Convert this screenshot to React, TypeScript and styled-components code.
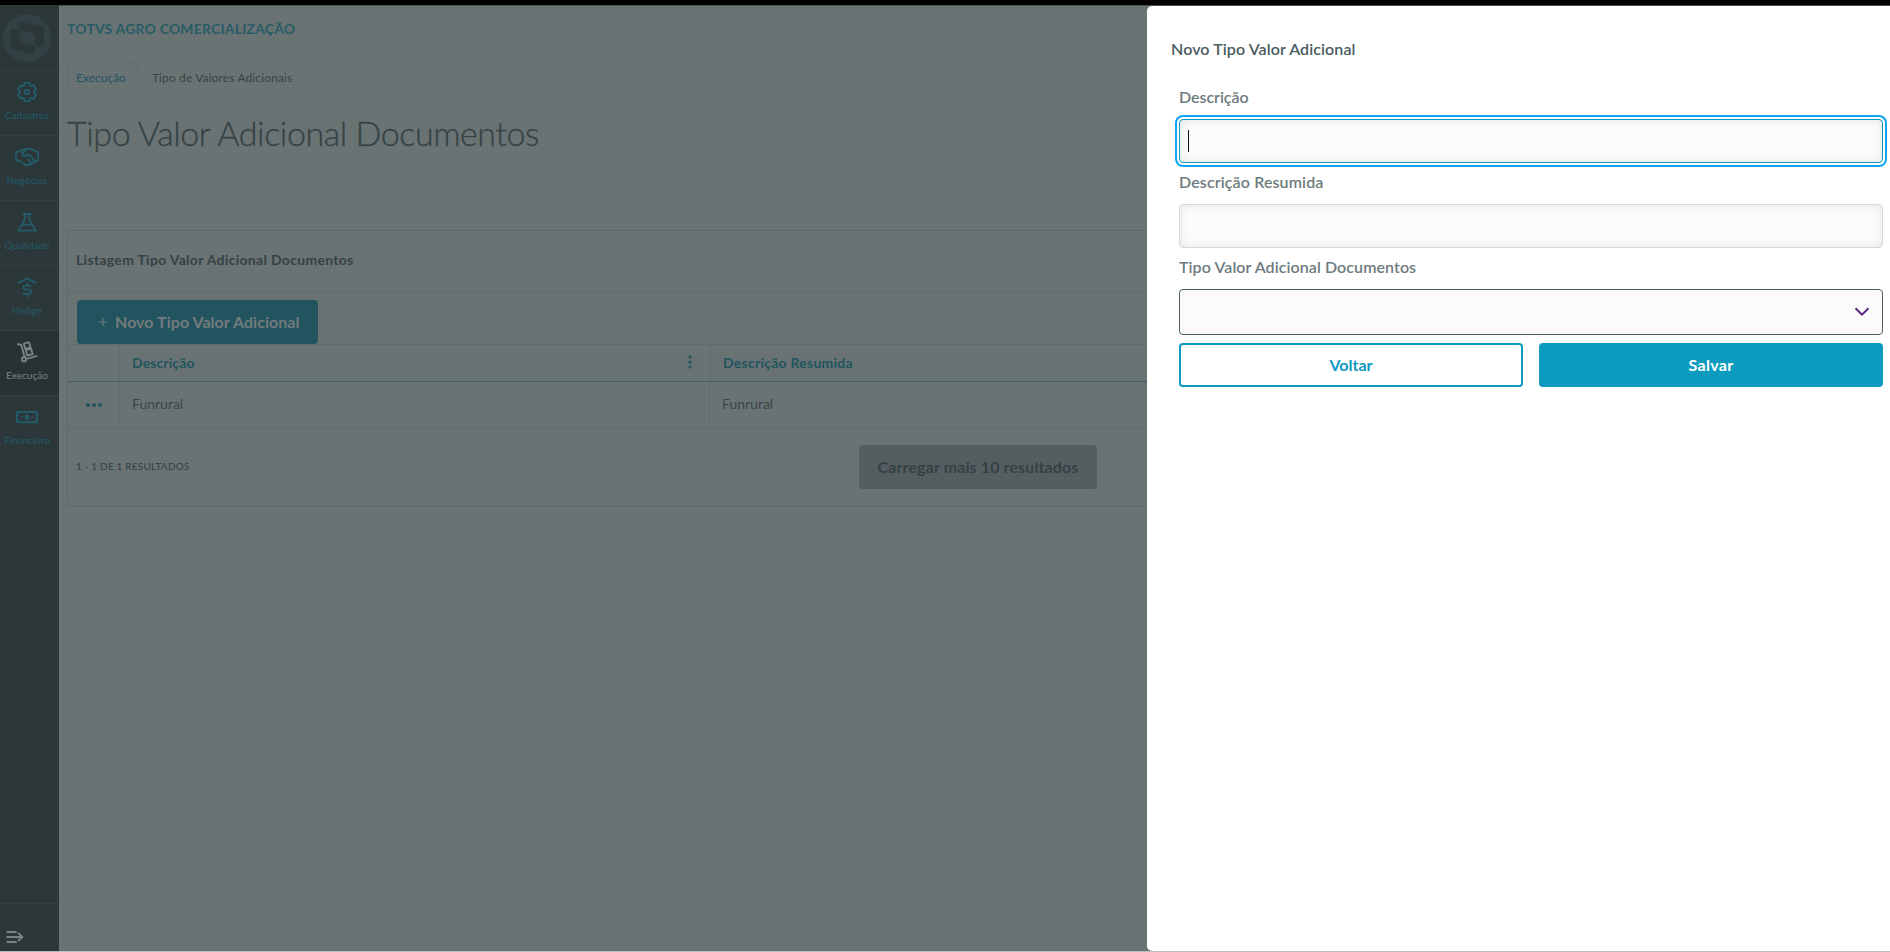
import React from 'react';
import styled, { createGlobalStyle, css } from 'styled-components';

const GlobalStyle = createGlobalStyle`
  *, *::before, *::after { box-sizing: border-box; }
  body { margin: 0; font-family: Lato, "Liberation Sans", sans-serif; overflow: hidden; }
  button, input { font-family: inherit; }
`;

const page = '#6a7374';
const line = '#626b6d';
const side = '#2c3739';
const teal = '#22545f';
const dark = '#364345';

const Screen = styled.div`
  position: relative;
  display: flex;
  width: 1890px;
  height: 952px;
  border-top: 5px solid #000;
  border-bottom: 1px solid #b9bdbf;
  background: ${page};
  overflow: hidden;
`;

/* Side menu */
const Sidebar = styled.nav`
  display: flex;
  flex-direction: column;
  flex: none;
  width: 59px;
  border-top: 1px solid #343638;
  background: ${side};
`;

const LogoBox = styled.div`
  height: 64px;
  padding: 8px 0 0 3px;
`;

const MenuItem = styled.a<{ $active?: boolean }>`
  display: flex;
  flex-direction: column;
  align-items: center;
  height: 65px;
  padding: 8px 5px 0 0;
  border-top: 1px solid #344042;
  background: ${p => (p.$active ? '#283133' : 'transparent')};
  color: ${p => (p.$active ? '#7a8385' : '#235b69')};
  svg { display: block; }
`;

const MenuLabel = styled.span<{ $spacing: number }>`
  margin-top: 4px;
  font-size: 10px;
  line-height: 12px;
  letter-spacing: ${p => p.$spacing}px;
`;

const Collapse = styled.div`
  height: 48px;
  margin-top: auto;
  padding: 26px 0 0 6px;
  border-top: 1px solid #344042;
  svg { display: block; }
`;

/* Page content */
const Main = styled.main`
  display: flex;
  flex-direction: column;
  flex: 1;
  padding: 0 9px 0 8px;
  border-top: 1px solid #4b5052;
`;

const Brand = styled.div`
  margin-top: 14px;
  font-size: 14px;
  font-weight: 700;
  line-height: 18px;
  letter-spacing: 0.18px;
  color: #285b66;
`;

const Breadcrumb = styled.div`
  display: flex;
  align-items: center;
  height: 32px;
  margin-top: 24px;
  padding-left: 8px;
  border: 1px solid #646d6f;
  border-radius: 4px;
  font-size: 12px;
  color: ${dark};
  svg { margin: 0 8px; }
`;

const CrumbLink = styled.a`
  padding-bottom: 2px;
  color: ${teal};
`;
const Crumb = styled.span`
  padding-bottom: 2px;
  letter-spacing: 0.13px;
`;

const PageTitle = styled.h1`
  margin: 18px 0 0;
  font-size: 34px;
  font-weight: 300;
  line-height: 42px;
  letter-spacing: -0.44px;
  -webkit-text-stroke: 0.35px ${dark};
  color: ${dark};
`;

const Card = styled.section`
  height: 277px;
  margin-top: 76px;
  border: 1px solid #5d6668;
  border-radius: 4px;
`;

const CardTitle = styled.h2`
  height: 60px;
  margin: 0;
  padding-left: 8px;
  font-size: 14px;
  font-weight: 700;
  line-height: 58px;
  letter-spacing: 0.3px;
  color: #354244;
`;

const Toolbar = styled.div`
  height: 53px;
  padding: 8px 0 0 9px;
  border-top: 1px solid ${line};
`;

const NewButton = styled.button`
  display: flex;
  align-items: center;
  width: 241px;
  height: 44px;
  padding: 0 0 2px 21px;
  border: 0;
  border-radius: 4px;
  background: ${teal};
  color: #727b7d;
  font-size: 16px;
  font-weight: 700;
  letter-spacing: 0.05px;
  svg { margin: 2px 7px 0 0; }
`;

const Grid = styled.div`
  display: grid;
`;

const HeadRow = styled.div`
  display: grid;
  grid-template-columns: 52px 591px 1fr;
  height: 38px;
  border-top: 1px solid ${line};
  border-bottom: 1px solid #3e606c;
`;

const BodyRow = styled.div`
  display: grid;
  grid-template-columns: 52px 590px 1fr;
  height: 46px;
  border-bottom: 1px solid ${line};
`;

const Cell = styled.div<{ $head?: boolean; $last?: boolean; $spacing?: number }>`
  display: flex;
  align-items: center;
  justify-content: space-between;
  padding: 0 18px 2px 12px;
  border-right: ${p => (p.$last ? '0' : `1px solid ${line}`)};
  font-size: 14px;
  letter-spacing: ${p => p.$spacing ?? 0}px;
  color: #3a4648;
  ${p => p.$head && css`
    font-weight: 700;
    color: ${teal};
  `}
`;

const ActionCell = styled(Cell)`
  justify-content: center;
  padding: 0;
  color: ${teal};
`;

const CardFooter = styled.footer`
  display: grid;
  grid-template-columns: 791px 1fr;
  align-items: center;
  height: 78px;
  padding: 0 0 1px 8px;
`;

const Results = styled.span`
  padding-bottom: 1px;
  font-size: 10px;
  font-weight: 500;
  letter-spacing: 0.2px;
  color: ${dark};
`;

const LoadMore = styled.button`
  width: 238px;
  height: 44px;
  margin-left: -8px;
  padding: 0 0 1px;
  border: 0;
  border-radius: 4px;
  background: #555d60;
  color: #344144;
  font-size: 16px;
  font-weight: 700;
  letter-spacing: 0.12px;
`;

/* Drawer that slides over the page */
const Drawer = styled.aside`
  position: absolute;
  top: 1px;
  right: 0;
  bottom: 0;
  display: flex;
  flex-direction: column;
  width: 743px;
  padding: 31px 7px 0 24px;
  border-radius: 5px 0 0 5px;
  background: #fff;
`;

const DrawerTitle = styled.h2`
  margin: 0;
  font-size: 16px;
  font-weight: 600;
  line-height: 24px;
  letter-spacing: 0.1px;
  color: #4a5c60;
`;

const Form = styled.form`
  display: flex;
  flex-direction: column;
  padding: 18px 0 0 8px;
`;

const Label = styled.label<{ $spacing: number }>`
  height: 40px;
  padding-top: 6px;
  font-size: 16px;
  font-weight: 600;
  line-height: 24px;
  letter-spacing: ${p => p.$spacing}px;
  color: #6e7b7e;
`;

const fieldBox = css`
  width: 100%;
  border-radius: 4px;
  background: #fbfbfb;
`;

const Field = styled.div<{ $focus?: boolean }>`
  ${fieldBox}
  display: flex;
  align-items: center;
  height: 44px;
  margin-bottom: 1px;
  padding: 0 8px;
  border: 1px solid ${p => (p.$focus ? '#0c9abe' : '#d9d9d9')};
  box-shadow: inset 0 0 8px rgba(0, 0, 0, 0.1)${p => (p.$focus ? ', 0 0 0 2px #fff, 0 0 0 4px #0fa5f5' : '')};
`;

const Caret = styled.span`
  width: 1px;
  height: 22px;
  background: #111;
`;

const Select = styled.div`
  ${fieldBox}
  display: flex;
  align-items: center;
  justify-content: flex-end;
  height: 46px;
  padding-right: 12px;
  border: 1px solid #4a5c60;
`;

const Actions = styled.div`
  display: grid;
  grid-template-columns: 1fr 1fr;
  gap: 16px;
  margin-top: 8px;
`;

const ActionButton = styled.button<{ $primary?: boolean }>`
  height: 44px;
  padding: 0 0 1px;
  border: 2px solid #0c9abe;
  border-radius: 4px;
  background: ${p => (p.$primary ? '#0c9abe' : '#fff')};
  color: ${p => (p.$primary ? '#fff' : '#0c9abe')};
  font-size: 16px;
  font-weight: 700;
  letter-spacing: ${p => (p.$primary ? 0.3 : 0)}px;
`;

/* Icons */
const IconSvg = styled.svg.attrs({
  width: 26, height: 26, viewBox: '0 0 26 26', fill: 'none',
  stroke: 'currentColor', strokeWidth: 1.9, strokeLinejoin: 'round' as const,
})``;

const gearPoints = Array.from({ length: 6 }).flatMap((_, k) =>
  ([[-27, 6.9], [-14, 9.4], [14, 9.4], [27, 6.9]] as const).map(([a, r]) => {
    const t = ((k * 60 - 90 + a) * Math.PI) / 180;
    return `${(13 + r * Math.cos(t)).toFixed(2)},${(13 + r * Math.sin(t)).toFixed(2)}`;
  })
).join(' ');

const GearIcon = () => (
  <IconSvg><polygon points={gearPoints} /><circle cx="13" cy="13" r="2.3" /></IconSvg>
);

const HandshakeIcon = () => (
  <IconSvg>
    <path d="M2 8.5 L6 7 L9 5.5 L13 5 L17 4.8 L20 6.8 L24 8.2 L24 16.5 L20 18 L17 20.2 L12.5 21.2 L9.5 19.5 L5.5 17 L2 16 Z" />
    <path d="M13 5.3 L8.2 9 Q7.8 11.6 10.5 12 L14.5 10.5 L17.2 12.5 L20.3 17.3 M14 14.5 L17.3 19.6" />
  </IconSvg>
);

const FlaskIcon = () => (
  <IconSvg>
    <path d="M8.5 5H17.5M10.8 5V10.5L4.2 21.6H21.8L15.2 10.5V5M7.8 15.8H18.2" strokeLinejoin="miter" />
  </IconSvg>
);

const HedgeIcon = () => (
  <IconSvg>
    <path d="M4 9.2L13 4.4L22 9.2" />
    <path d="M17 11.6H11.5Q9.3 11.6 9.3 13.6T11.5 15.6H14.7Q17 15.6 17 17.8T14.7 20H9M13 8.5V11.6M13 20V23.2" />
  </IconSvg>
);

const DollyIcon = () => (
  <IconSvg>
    <path d="M3.2 4.8L7.2 6L10.7 18.2M12.5 19.8L23.2 16.8" />
    <circle cx="10" cy="20.4" r="2.1" />
    <path d="M9.8 4.7L15 3.2L16.5 8.4L11.3 9.9ZM11.8 11.2L17 9.7L18.6 15L13.4 16.5Z" />
  </IconSvg>
);

const MoneyIcon = () => (
  <IconSvg>
    <rect x="3" y="8" width="20" height="10.2" rx="0.6" strokeWidth="2.1" />
    <path d="M3 11L6 8H3ZM23 11L20 8H23ZM3 15.2L6 18.2H3ZM23 15.2L20 18.2H23Z" fill="currentColor" stroke="none" />
    <ellipse cx="13" cy="13.1" rx="2.2" ry="2.9" fill="currentColor" stroke="none" />
    <circle cx="8" cy="13.1" r="1" fill="currentColor" stroke="none" />
    <circle cx="18" cy="13.1" r="1" fill="currentColor" stroke="none" />
  </IconSvg>
);

const Logo = () => (
  <svg width="48" height="48" viewBox="0 0 48 48">
    <circle cx="24" cy="24" r="24" fill="#344144" />
    <path d="M16.5 8.5Q16.8 7.6 18.5 7.9L38.5 12.3Q41 13 41 15V29.5Q41 33 38 32.8L31.8 31.3V38.5Q31.5 40.4 29.5 40L9.5 35Q7 34.3 7 32V17.5Q7 14.6 9.5 14.8L16.5 16.3Z" fill={side} />
    <path d="M16.5 16.3L28.8 19Q31.8 19.8 31.8 22.5V31.3L19.5 28.3Q16.5 27.4 16.5 24.6Z" fill="#344144" />
  </svg>
);

const menu = [
  { label: 'Cadastros', Icon: GearIcon, spacing: 0.1 },
  { label: 'Negócios', Icon: HandshakeIcon, spacing: 0.03 },
  { label: 'Qualidade', Icon: FlaskIcon, spacing: 0.03 },
  { label: 'Hedge', Icon: HedgeIcon, spacing: 0.24 },
  { label: 'Execução', Icon: DollyIcon, spacing: 0.05, active: true },
  { label: 'Financeiro', Icon: MoneyIcon, spacing: 0.03 },
];

export default function App() {
  return (
    <Screen>
      <GlobalStyle />
      <Sidebar>
        <LogoBox><Logo /></LogoBox>
        {menu.map(({ label, Icon, spacing, active }) => (
          <MenuItem key={label} $active={active}>
            <Icon />
            <MenuLabel $spacing={spacing}>{label}</MenuLabel>
          </MenuItem>
        ))}
        <Collapse>
          <svg width="19" height="14" viewBox="0 0 19 14" fill="none" stroke="#7a8385" strokeWidth="1.8">
            <path d="M0.5 2H10.5M0.5 7H16.5M0.5 12H10.5M12 2.8L16.4 7L12 11.2" />
          </svg>
        </Collapse>
      </Sidebar>

      <Main>
        <Brand>TOTVS AGRO COMERCIALIZAÇÃO</Brand>
        <Breadcrumb>
          <CrumbLink>Execução</CrumbLink>
          <svg width="10" height="30" viewBox="0 0 10 30" fill="none" stroke="#636c6e">
            <path d="M1 0L8.5 16L1 30" />
          </svg>
          <Crumb>Tipo de Valores Adicionais</Crumb>
        </Breadcrumb>
        <PageTitle>Tipo Valor Adicional Documentos</PageTitle>

        <Card>
          <CardTitle>Listagem Tipo Valor Adicional Documentos</CardTitle>
          <Toolbar>
            <NewButton>
              <svg width="10" height="10" viewBox="0 0 10 10" stroke="currentColor" strokeWidth="1.2">
                <path d="M5 0.8V9.2M0.8 5H9.2" />
              </svg>
              Novo Tipo Valor Adicional
            </NewButton>
          </Toolbar>
          <Grid>
            <HeadRow>
              <Cell $head />
              <Cell $head $spacing={0.1}>
                Descrição
                <svg width="4" height="14" viewBox="0 0 4 14" fill="currentColor">
                  <circle cx="2" cy="2" r="1.6" /><circle cx="2" cy="7" r="1.6" /><circle cx="2" cy="12" r="1.6" />
                </svg>
              </Cell>
              <Cell $head $last $spacing={0.25}>Descrição Resumida</Cell>
            </HeadRow>
            <BodyRow>
              <ActionCell>
                <svg width="18" height="6" viewBox="0 0 18 6" fill="currentColor">
                  <circle cx="3" cy="3" r="2.1" /><circle cx="9" cy="3" r="2.1" /><circle cx="15" cy="3" r="2.1" />
                </svg>
              </ActionCell>
              <Cell>Funrural</Cell>
              <Cell $last>Funrural</Cell>
            </BodyRow>
          </Grid>
          <CardFooter>
            <Results>1 - 1 DE 1 RESULTADOS</Results>
            <LoadMore>Carregar mais 10 resultados</LoadMore>
          </CardFooter>
        </Card>
      </Main>

      <Drawer>
        <DrawerTitle>Novo Tipo Valor Adicional</DrawerTitle>
        <Form>
          <Label $spacing={-0.05}>Descrição</Label>
          <Field $focus><Caret /></Field>
          <Label $spacing={0.12}>Descrição Resumida</Label>
          <Field />
          <Label $spacing={0.08}>Tipo Valor Adicional Documentos</Label>
          <Select>
            <svg width="16" height="10" viewBox="0 0 16 10" fill="none" stroke="#5c2483" strokeWidth="2">
              <path d="M1.5 1.3L8 7.6L14.5 1.3" />
            </svg>
          </Select>
          <Actions>
            <ActionButton type="button">Voltar</ActionButton>
            <ActionButton type="button" $primary>Salvar</ActionButton>
          </Actions>
        </Form>
      </Drawer>
    </Screen>
  );
}
